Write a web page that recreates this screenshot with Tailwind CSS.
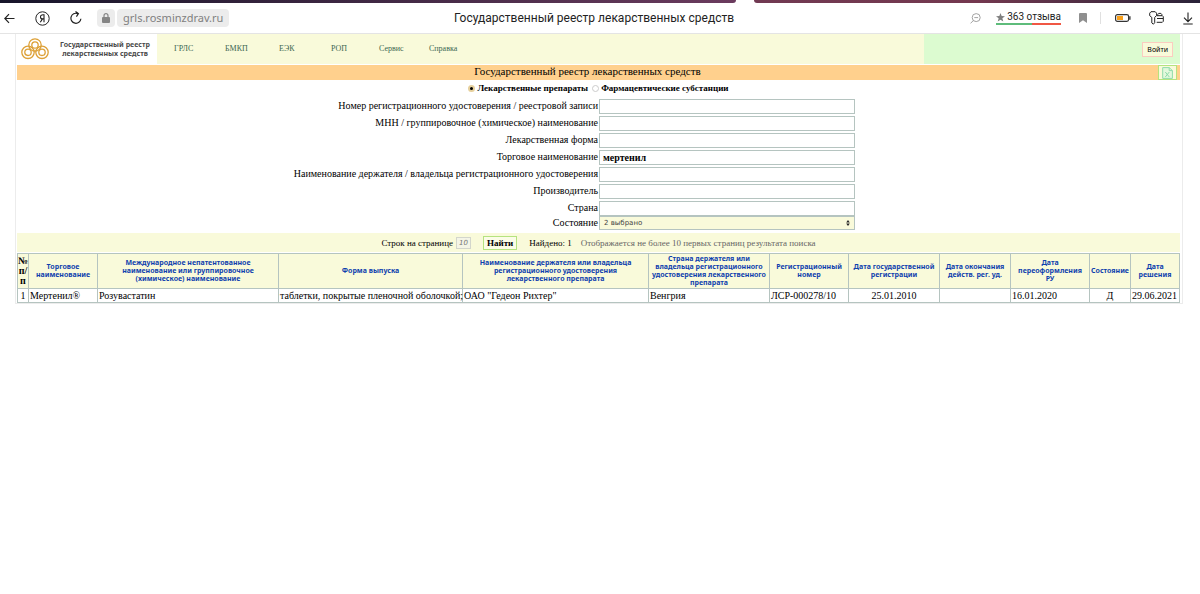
<!DOCTYPE html>
<html lang="ru">
<head>
<meta charset="utf-8">
<meta name="viewport" content="width=device-width, initial-scale=1">
<title>Государственный реестр лекарственных средств</title>
<script src="https://cdn.jsdelivr.net/npm/@tailwindcss/browser@4"></script>
</head>
<body class="min-h-screen bg-white font-['Liberation_Serif',serif] text-[10px] leading-[14px] text-black">

<!-- Browser tab strip -->
<div class="flex h-[3px] gap-[18px]">
  <div class="grow-[736] basis-0 rounded-br-[3px] bg-linear-to-r from-[#17152a] to-[#6b3b5e]"></div>
  <div class="grow-[446] basis-0 rounded-bl-[3px] bg-linear-to-r from-[#713952] via-[#74384f] to-[#2a2238]"></div>
</div>

<!-- Browser toolbar -->
<header class="relative flex h-[31px] items-center border-b border-[#e4e4e4] pr-[7px] pl-1 font-['Noto_Sans',sans-serif]">
  <button aria-label="Назад" class="w-[11px]"><svg class="h-[11px] w-[11px]" viewBox="0 0 11 11" fill="none" stroke="#222" stroke-width="1.2"><path d="M10.5 5.5H.8M5 1.2.8 5.5 5 9.8"/></svg></button>
  <button aria-label="Яндекс" class="ml-5"><svg class="h-[15px] w-[15px]" viewBox="0 0 15 15" fill="none" stroke="#222"><circle cx="7.5" cy="7.5" r="6.7"/><path stroke-width="1.1" d="M9 11.3V3.8H8C6.4 3.8 5.5 4.7 5.5 5.9c0 1.3.8 2 2 2H9M7.5 7.9 5.3 11.3"/></svg></button>
  <button aria-label="Обновить" class="ml-5"><svg class="h-[14px] w-[12px]" viewBox="0 0 12 14" fill="none" stroke="#222" stroke-width="1.2"><path d="M10.9 7.8a5 5 0 1 1-3.2-5.2M5.5.5l2.9 2.2-2 2.9"/></svg></button>
  <div class="ml-[15px] flex gap-0.5">
    <span class="grid h-[18px] w-[18px] place-items-center rounded-[4px] bg-[#ececec]"><svg class="h-[10px] w-2" viewBox="0 0 8 10"><path fill="none" stroke="#858585" stroke-width="1.2" d="M2 5V2.7a2 2 0 0 1 4 0V5"/><rect y="4" width="8" height="6" rx="1" fill="#858585"/></svg></span>
    <a href="#" class="flex h-[18px] items-center rounded-[4px] bg-[#ececec] px-1.5 text-[11px] text-[#808080]">grls.rosminzdrav.ru</a>
  </div>
  <p class="absolute left-1/2 -translate-x-1/2 pr-3 font-['Roboto',sans-serif] text-[12px] whitespace-nowrap text-[#222]">Государственный реестр лекарственных средств</p>
  <div class="ml-auto flex items-center">
    <button aria-label="Масштаб"><svg class="h-[11px] w-[11px]" viewBox="0 0 11 11" fill="none" stroke="#999" stroke-width=".9"><circle cx="6.2" cy="4.6" r="4"/><path d="M3.4 7.5.5 10.4M4.3 4.6h3.800"/></svg></button>
    <a href="#" class="ml-[15px] flex flex-col font-['Roboto',sans-serif] text-[10px] text-[#222]">
      <span class="flex items-center gap-0.5 leading-3"><svg class="h-[9px] w-[9px]" viewBox="0 0 10 10"><path fill="#808080" d="m5 0 1.300 3.400 3.700.2-2.900 2.300 1 3.600L5 7.500 1.900 9.500l1-3.600L0 3.600l3.700-.2z"/></svg>363 отзыва</span>
      <span class="flex h-0.5"><i class="w-[55%] bg-[#5ebc7b]"></i><i class="w-[45%] bg-[#f05744]"></i></span>
    </a>
    <button aria-label="Закладка" class="ml-[18px]"><svg class="h-[10px] w-2" viewBox="0 0 8 10"><path fill="#8f8f8f" d="M1 0h6a1 1 0 0 1 1 1v9L4 7.200 0 10V1a1 1 0 0 1 1-1z"/></svg></button>
    <span class="ml-[13px] h-3 w-px bg-[#e0e0e0]"></span>
    <svg class="ml-[14px] h-2 w-4" viewBox="0 0 16 8"><rect x=".6" y=".6" width="13" height="6.800" rx="1.800" fill="none" stroke="#333" stroke-width="1.200"/><path fill="#f9a01b" d="M2 2h6v4H2z"/><path fill="#222" d="M14.300 2.300h1.200v3.400h-1.200z"/></svg>
    <button aria-label="Пароли" class="ml-[18px]"><svg class="h-[14px] w-[15px]" viewBox="0 0 15 14" fill="none" stroke="#222" stroke-width="1" stroke-linejoin="round"><path d="M2 .7h4.200l1.400 1.500v2.300L5.700 6.400v5.300L4.400 13.200 2.800 11.900V6.400L.7 4.700V2.200zM8.800 4.700V3.400l.9-1h2.200l.9 1v1.300M7.700 4.700h5.600l1 1v4.600l-1 1H7.700M8 7.500h6"/></svg></button>
    <button aria-label="Загрузки" class="ml-[19px]"><svg class="h-[13px] w-[10px]" viewBox="0 0 10 13" fill="none" stroke="#222" stroke-width="1.1"><path d="M5 .5v9M1 5.600l4 4 4-4M.3 12h9.400"/></svg></button>
  </div>
</header>

<main class="mr-[17px] ml-[15px] border-x border-b border-[#ececec] pr-0.5 pl-px">
  <!-- Site header -->
  <div class="flex h-[30px]">
    <a href="#" class="flex w-[140px] shrink-0 items-center gap-2 pl-1">
      <svg class="h-[22px] w-7 shrink-0" viewBox="0 0 28 22" fill="none" stroke="#dda036" stroke-width="1.3"><circle cx="14" cy="7" r="6.2"/><circle cx="14" cy="7" r="3.2"/><circle cx="7" cy="14.3" r="6.2"/><circle cx="7" cy="14.3" r="3.2"/><circle cx="21" cy="14.3" r="6.2"/><circle cx="21" cy="14.3" r="3.2"/></svg>
      <span class="grow pr-1 text-center font-['Noto_Sans',sans-serif] text-[7px] leading-[9px] font-bold whitespace-nowrap text-[#4a4a4a]">Государственный реестр<br>лекарственных средств</span>
    </a>
    <nav class="flex grow-[768] basis-0 items-center bg-[#f9fada] pl-[17px] text-[8px] text-[#3b6650]">
      <a href="#" class="w-[51px]">ГРЛС</a>
      <a href="#" class="w-[54px]">БМКП</a>
      <a href="#" class="w-[52px]">ЕЭК</a>
      <a href="#" class="w-12">РОП</a>
      <a href="#" class="w-[50px]">Сервис</a>
      <a href="#">Справка</a>
    </nav>
    <div class="flex grow-[255] basis-0 items-center justify-end bg-[#dcfbd0] pr-[7px]">
      <button class="h-[15px] border border-[#fbccc0] bg-[#f9fada] px-1 font-['Noto_Sans',sans-serif] text-[7px] leading-[13px]">Войти</button>
    </div>
  </div>

  <!-- Title bar -->
  <div class="mt-px flex h-[15px] items-start bg-[#ffd08d]">
    <h1 class="grow text-center text-[11px] leading-[13px]">Государственный реестр лекарственных средств</h1>
    <button aria-label="Выгрузить в Excel" class="mr-[3px] grid h-[15px] w-[19px] place-items-center border border-[#b5e37f] bg-[#f9fada]"><svg class="h-3 w-[11px]" viewBox="0 0 11 12" fill="none" stroke="#8fdcaa" stroke-width="1"><path fill="#e3f8dc" d="M.7.6h6.500l3.200 3v7.800H.7zM7.200.6v3h3.200"/><path d="m3.300 5 4 5M7.300 5l-4 5"/></svg></button>
  </div>

  <!-- Search form -->
  <form>
    <div class="flex h-[19px] items-start justify-center gap-1 pt-px text-[9px] font-bold">
      <label class="flex items-center gap-0.5"><input type="radio" name="kind" checked class="m-0 h-[7px] w-[7px] appearance-none rounded-full border border-[#d5b97c] bg-white checked:border-2 checked:border-[#e6d09c] checked:bg-black">Лекарственные препараты</label>
      <label class="flex items-center gap-0.5"><input type="radio" name="kind" class="m-0 h-[7px] w-[7px] appearance-none rounded-full border border-[#ccc] bg-white checked:border-2 checked:border-[#e6d09c] checked:bg-black">Фармацевтические субстанции</label>
    </div>
    <div class="grid grid-cols-2 gap-x-px gap-y-0.5 leading-[13px]">
      <label for="f1" class="h-[15px] text-right">Номер регистрационного удостоверения / реестровой записи</label>
      <input id="f1" class="h-[15px] w-[256px] border border-[#b5c4c0] px-[3px] font-bold outline-none">
      <label for="f2" class="h-[15px] text-right">МНН / группировочное (химическое) наименование</label>
      <input id="f2" class="h-[15px] w-[256px] border border-[#b5c4c0] px-[3px] font-bold outline-none">
      <label for="f3" class="h-[15px] text-right">Лекарственная форма</label>
      <input id="f3" class="h-[15px] w-[256px] border border-[#b5c4c0] px-[3px] font-bold outline-none">
      <label for="f4" class="h-[15px] text-right">Торговое наименование</label>
      <input id="f4" value="мертенил" class="h-[15px] w-[256px] border border-[#b5c4c0] px-[3px] font-bold outline-none">
      <label for="f5" class="h-[15px] text-right">Наименование держателя / владельца регистрационного удостоверения</label>
      <input id="f5" class="h-[15px] w-[256px] border border-[#b5c4c0] px-[3px] font-bold outline-none">
      <label for="f6" class="h-[15px] text-right">Производитель</label>
      <input id="f6" class="h-[15px] w-[256px] border border-[#b5c4c0] px-[3px] font-bold outline-none">
      <label for="f7" class="h-[15px] text-right">Страна</label>
      <input id="f7" class="h-[15px] w-[256px] border border-[#b5c4c0] px-[3px] font-bold outline-none">
    </div>
    <div class="grid grid-cols-2 gap-x-px leading-[13px]">
      <label for="state" class="h-[14px] text-right">Состояние</label>
      <div class="relative w-[256px]">
        <select id="state" class="block h-[14px] w-full appearance-none border border-[#b5c4c0] bg-[#f9fada] pl-1 font-['DejaVu_Sans',sans-serif] text-[7px] leading-3 text-[#444]"><option>2 выбрано</option></select>
        <svg class="pointer-events-none absolute top-1 right-[5px] h-[6px] w-1" viewBox="0 0 4 6"><path d="M2 0l1.800 2.500H.2zM2 6l1.800-2.500H.2z" fill="#222"/></svg>
      </div>
    </div>

    <div class="mt-[3px] flex h-[19px] items-center justify-center bg-[#f9fada] text-[9px]">
      <label for="rows">Строк на странице</label>
      <input id="rows" value="10" class="ml-[3px] h-3 w-[15px] border border-[#d3d6cc] bg-[#f4f5e6] text-center font-['DejaVu_Sans',sans-serif] text-[7px] text-[#777] italic">
      <button type="button" class="ml-3 h-[14px] border border-[#b5e37f] bg-[#fbfce6] px-[3px] leading-3 font-bold">Найти</button>
      <span class="ml-3">Найдено: 1</span>
      <span class="ml-[9px] text-[#666]">Отображается не более 10 первых страниц результата поиска</span>
    </div>
  </form>

  <!-- Search results -->
  <table class="mt-px w-full table-fixed border-collapse border border-[#b5c4c0]">
    <colgroup>
      <col class="w-[11px]"><col class="w-[69px]"><col class="w-[181px]"><col class="w-[184px]"><col class="w-[186px]"><col class="w-[121px]"><col class="w-[79px]"><col class="w-[91px]"><col class="w-[71px]"><col class="w-[79px]"><col class="w-[41px]"><col class="w-[49px]">
    </colgroup>
    <thead class="bg-[#f9fada] font-['Noto_Sans',sans-serif] text-[7px] leading-2 text-[#0f3fae] [&_th]:border [&_th]:border-[#b5c4c0] [&_th]:p-0">
      <tr class="h-[35px]">
        <th class="font-['Liberation_Serif',serif] text-[10px] leading-[10px] text-black">№ п/п</th>
        <th>Торговое<br>наименование</th>
        <th>Международное непатентованное<br>наименование или группировочное<br>(химическое) наименование</th>
        <th>Форма выпуска</th>
        <th>Наименование держателя или владельца<br>регистрационного удостоверения<br>лекарственного препарата</th>
        <th>Страна держателя или<br>владельца регистрационного<br>удостоверения лекарственного<br>препарата</th>
        <th>Регистрационный<br>номер</th>
        <th>Дата государственной<br>регистрации</th>
        <th>Дата окончания<br>действ. рег. уд.</th>
        <th>Дата<br>переоформления<br>РУ</th>
        <th>Состояние</th>
        <th>Дата<br>решения</th>
      </tr>
    </thead>
    <tbody class="leading-[13px] whitespace-nowrap [&_td]:border [&_td]:border-[#b5c4c0] [&_td]:px-px [&_td]:py-0">
      <tr>
        <td class="text-center">1</td><td>Мертенил®</td><td>Розувастатин</td><td>таблетки, покрытые пленочной оболочкой;</td><td>ОАО "Гедеон Рихтер"</td><td>Венгрия</td><td>ЛСР-000278/10</td><td class="text-center">25.01.2010</td><td></td><td>16.01.2020</td><td class="text-center">Д</td><td>29.06.2021</td>
      </tr>
    </tbody>
  </table>
</main>
</body>
</html>
